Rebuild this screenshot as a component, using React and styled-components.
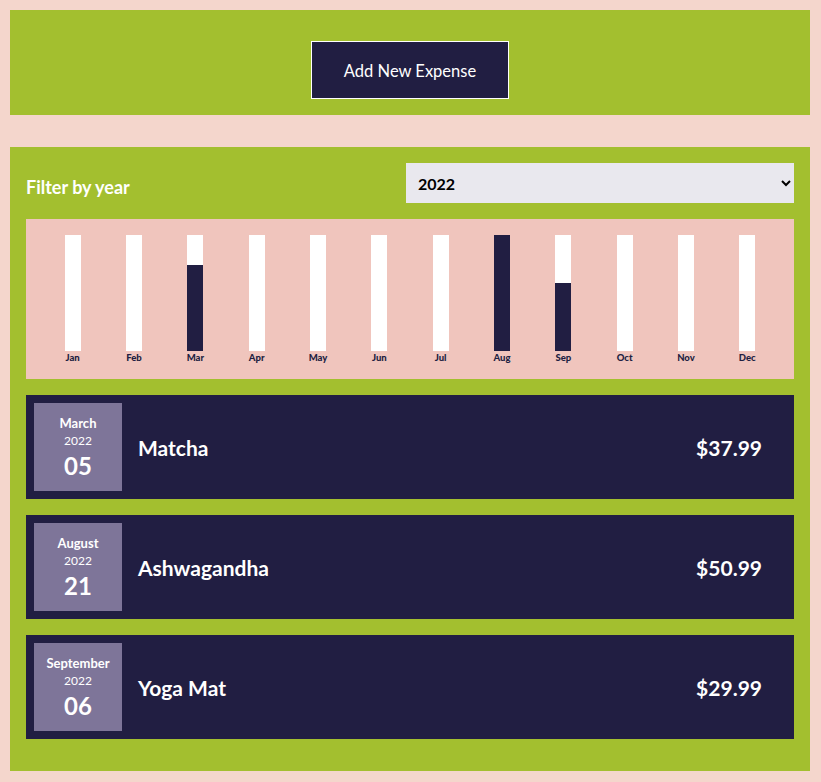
import React from 'react';
import styled, {createGlobalStyle} from 'styled-components';

const GlobalStyle = createGlobalStyle`
    * {
        box-sizing: border-box;
    }
    body {
        margin: 0;
        background: #f4d6cc;
        font-family: Lato, "Noto Sans", sans-serif;
    }
`;

const Page = styled.div`
    padding: 10px;
`;

const Panel = styled.section`
    background: #a3bf2f;
    width: 800px;
    margin-bottom: 32px;
    padding: 16px;
`;

const NewExpense = styled(Panel)`
    display: flex;
    justify-content: center;
    padding: 31px 0 16px;
`;

const AddButton = styled.button`
    width: 198px;
    height: 58px;
    background: #211e42;
    color: #fff;
    border: 1px solid #fff;
    font-family: inherit;
    font-size: 16.5px;
    padding-top: 2px;
    cursor: pointer;
`;

const FilterRow = styled.div`
    display: flex;
    justify-content: space-between;
    align-items: center;
    height: 40px;
`;

const FilterLabel = styled.label`
    color: #fff;
    font-weight: bold;
    font-size: 18px;
    padding-top: 7px;
`;

const YearSelect = styled.select`
    width: 388px;
    height: 40px;
    background: #e9e8ee;
    border: none;
    font-family: inherit;
    font-weight: bold;
    font-size: 16px;
    padding: 0 8px;
    color: #000;
`;

const Chart = styled.div`
    display: flex;
    margin-top: 16px;
    height: 160px;
    padding: 16px;
    background: #f0c5bd;
`;

const BarColumn = styled.div`
    flex: 1;
    display: flex;
    flex-direction: column;
    align-items: center;
`;

const BarTrack = styled.div`
    width: 16px;
    height: 117px;
    background: #fff;
    display: flex;
    flex-direction: column;
    justify-content: flex-end;
`;

const BarFill = styled.div`
    background: #211e42;
`;

const BarLabel = styled.div`
    font-size: 9.5px;
    font-weight: 900;
    color: #211e42;
    margin-top: 1px;
`;

const ExpenseList = styled.ul`
    list-style: none;
    margin: 16px 0;
    padding: 0;
    display: flex;
    flex-direction: column;
    gap: 16px;
`;

const ExpenseItem = styled.li`
    display: flex;
    align-items: center;
    background: #211e42;
    height: 104px;
    padding: 8px 32px 8px 8px;
`;

const DateBox = styled.div`
    width: 88px;
    height: 88px;
    background: #7e7599;
    color: #fff;
    display: flex;
    flex-direction: column;
    align-items: center;
    justify-content: center;
`;

const DateMonth = styled.div`
    font-size: 13px;
    font-weight: bold;
`;

const DateYear = styled.div`
    font-size: 12px;
    margin-top: 2px;
`;

const DateDay = styled.div`
    font-size: 24px;
    font-weight: bold;
    margin-top: 3px;
`;

const Title = styled.h2`
    flex: 1;
    margin: 0 0 0 16px;
    color: #fff;
    font-size: 21px;
`;

const Price = styled.div`
    color: #fff;
    font-size: 21px;
    font-weight: bold;
`;

const months = ['Jan', 'Feb', 'Mar', 'Apr', 'May', 'Jun', 'Jul', 'Aug', 'Sep', 'Oct', 'Nov', 'Dec'];

const expenses = [
    {month: 'March', m: 2, year: 2022, day: '05', title: 'Matcha', amount: 37.99},
    {month: 'August', m: 7, year: 2022, day: '21', title: 'Ashwagandha', amount: 50.99},
    {month: 'September', m: 8, year: 2022, day: '06', title: 'Yoga Mat', amount: 29.99},
];

export default function App() {
    const totals = months.map((_, i) =>
        expenses.filter(e => e.m === i).reduce((s, e) => s + e.amount, 0)
    );
    const max = Math.max(...totals);

    return (
        <Page>
            <GlobalStyle />
            <NewExpense>
                <AddButton>Add New Expense</AddButton>
            </NewExpense>
            <Panel>
                <FilterRow>
                    <FilterLabel>Filter by year</FilterLabel>
                    <YearSelect defaultValue="2022">
                        <option value="2022">2022</option>
                        <option value="2021">2021</option>
                        <option value="2020">2020</option>
                        <option value="2019">2019</option>
                    </YearSelect>
                </FilterRow>
                <Chart>
                    {months.map((name, i) => (
                        <BarColumn key={name}>
                            <BarTrack>
                                <BarFill style={{height: `${(totals[i] / max) * 100}%`}} />
                            </BarTrack>
                            <BarLabel>{name}</BarLabel>
                        </BarColumn>
                    ))}
                </Chart>
                <ExpenseList>
                    {expenses.map(e => (
                        <ExpenseItem key={e.title}>
                            <DateBox>
                                <DateMonth>{e.month}</DateMonth>
                                <DateYear>{e.year}</DateYear>
                                <DateDay>{e.day}</DateDay>
                            </DateBox>
                            <Title>{e.title}</Title>
                            <Price>${e.amount.toFixed(2)}</Price>
                        </ExpenseItem>
                    ))}
                </ExpenseList>
            </Panel>
        </Page>
    );
}
